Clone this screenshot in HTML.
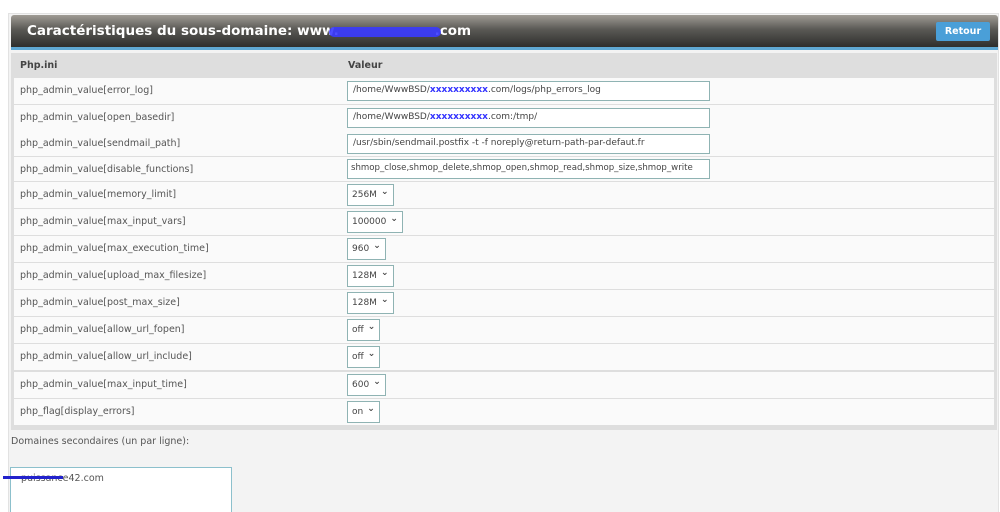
<!DOCTYPE html>
<html><head><meta charset="utf-8"><style>
*{box-sizing:border-box;margin:0;padding:0}
html,body{width:1000px;height:512px;overflow:hidden}
body{background:#fff;font-family:"DejaVu Sans","Liberation Sans",sans-serif;font-size:9.5px;color:#555;position:relative}
.wrap{position:absolute;left:8px;top:13px;width:991px;height:499px;background:#f3f3f3;border:1px solid #e2e2e2;border-bottom:none}
.hdr{position:absolute;left:11px;top:15px;width:987px;height:35px;background:linear-gradient(#a09c95,#5a5955 45%,#2e2e2c);border-bottom:3px solid #5fa8d3;border-radius:3px 3px 0 0}
.hdr h1{position:absolute;left:16px;top:8px;color:#fff;font-size:13.5px;font-weight:bold;white-space:nowrap}
.scrib{position:absolute;left:318px;top:12px;width:112px;height:10px;background:#3a3aff;border-radius:6px;opacity:.9}
.btn{position:absolute;left:936px;top:22px;width:54px;height:19px;background:#4a9fd8;border-radius:2px;color:#fff;font-weight:bold;font-size:9.5px;text-align:center;line-height:19px}
.tbl{position:absolute;left:11px;top:53px;width:986px;height:377px;background:#dedede}
.th{position:absolute;left:20px;top:60px;font-weight:bold;color:#444}
.row{position:absolute;left:14px;width:980px;height:26px;background:#fafafa}
.row span{position:absolute;left:6px;top:7px}
.in{position:absolute;left:333px;top:3px;width:363px;height:20px;border:1px solid #8fb3b3;background:#fff;padding:3px 5px;color:#444;white-space:nowrap;overflow:hidden;font-size:9px}
.sel{position:absolute;left:333px;top:2px;height:22px;border:1px solid #8fb3b3;background:#fff;padding:5px 4px;color:#444;font-size:9px}
.sel:after{content:"⌄";font-weight:bold;margin-left:4px;position:relative;top:-3px}
.lbl{position:absolute;left:11px;top:436px}
.ta{position:absolute;left:10px;top:467px;width:222px;height:60px;border:1px solid #8cc0cc;background:#fff}
.ta span{position:absolute;left:10px;top:5px}
.strike{position:absolute;left:3px;top:476px;width:60px;height:3px;background:#2222cc}
</style></head><body>
<div class="wrap"></div>
<div class="hdr"><h1>Caractéristiques du sous-domaine: www.<span style="opacity:0">xxxxxxxxxxx</span>.com</h1><div class="scrib"></div></div>
<div class="btn">Retour</div>
<div class="tbl"></div>
<div class="th">Php.ini</div><div class="th" style="left:348px">Valeur</div>
<div class="row" style="top:78px"><span>php_admin_value[error_log]</span><div class="in">/home/WwwBSD/<b style="color:#33f">xxxxxxxxxx</b>.com/logs/php_errors_log</div></div>
<div class="row" style="top:105px"><span>php_admin_value[open_basedir]</span><div class="in">/home/WwwBSD/<b style="color:#33f">xxxxxxxxxx</b>.com:/tmp/</div></div>
<div class="row" style="top:131px;height:25px"><span>php_admin_value[sendmail_path]</span><div class="in">/usr/sbin/sendmail.postfix -t -f noreply@return-path-par-defaut.fr</div></div>
<div class="row" style="top:157px;height:24px"><span>php_admin_value[disable_functions]</span><div class="in" style="top:2px;font-size:8.6px;padding:3px 3px">shmop_close,shmop_delete,shmop_open,shmop_read,shmop_size,shmop_write</div></div>
<div class="row" style="top:182px"><span>php_admin_value[memory_limit]</span><div class="sel">256M</div></div>
<div class="row" style="top:209px"><span>php_admin_value[max_input_vars]</span><div class="sel">100000</div></div>
<div class="row" style="top:236px"><span>php_admin_value[max_execution_time]</span><div class="sel">960</div></div>
<div class="row" style="top:263px"><span>php_admin_value[upload_max_filesize]</span><div class="sel">128M</div></div>
<div class="row" style="top:290px"><span>php_admin_value[post_max_size]</span><div class="sel">128M</div></div>
<div class="row" style="top:317px"><span>php_admin_value[allow_url_fopen]</span><div class="sel">off</div></div>
<div class="row" style="top:344px"><span>php_admin_value[allow_url_include]</span><div class="sel">off</div></div>
<div class="row" style="top:372px"><span>php_admin_value[max_input_time]</span><div class="sel">600</div></div>
<div class="row" style="top:399px"><span>php_flag[display_errors]</span><div class="sel">on</div></div>
<div class="lbl">Domaines secondaires (un par ligne):</div>
<div class="ta"><span>puissance42.com</span></div>
<div class="strike"></div>
</body></html>
